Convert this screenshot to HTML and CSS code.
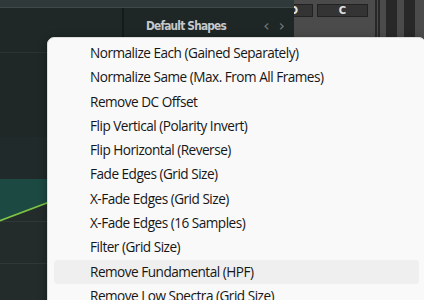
FILE: index.html
```html
<!DOCTYPE html>
<html>
<head>
<meta charset="utf-8">
<link rel="stylesheet" href="styles.css">
</head>
<body>
<div class="app">
  <div class="editor">
    <div class="topstrip"></div>
    <div class="editor-body">
      <div class="wave">
        <svg width="122" height="292" viewBox="0 0 122 292">
          <line x1="0" y1="44.5" x2="122" y2="44.5" stroke="#2a3333" stroke-width="1"/>
          <line x1="0" y1="129.5" x2="122" y2="129.5" stroke="#283131" stroke-width="1"/>
          <rect x="0" y="129" width="122" height="42" fill="#212a2a"/>
          <rect x="0" y="171" width="122" height="121" fill="#232b2b"/>
          <polygon points="0,171 70,171 70,186.3 0,212.7" fill="#1d4943"/>
          <line x1="0" y1="213.5" x2="122" y2="213.5" stroke="#2f3838" stroke-width="1"/>
          <line x1="0" y1="255.5" x2="122" y2="255.5" stroke="#2f3838" stroke-width="1"/>
          <line x1="0" y1="212.7" x2="70" y2="186.3" stroke="#7cc444" stroke-width="1.6"/>
        </svg>
      </div>
      <div class="shapes">
        <div class="shapes-head">
          <span class="shapes-title">Default Shapes</span>
          <span class="arrows"><span>&#8249;</span><span>&#8250;</span></span>
        </div>
      </div>
    </div>
  </div>
  <div class="rack">
    <div class="rack-buttons">
      <div class="btn btn-d">D</div>
      <div class="btn btn-c">C</div>
    </div>
    <div class="s dark w2"></div>
    <div class="s grey w1"></div>
    <div class="s dark w2"></div>
    <div class="s grey w6"></div>
    <div class="s dark w11"></div>
    <div class="s grey w7"></div>
    <div class="s dark w11"></div>
    <div class="s grey wrest"></div>
  </div>
</div>

<div class="menu">
  <div class="item">Normalize Each (Gained Separately)</div>
  <div class="item">Normalize Same (Max. From All Frames)</div>
  <div class="item">Remove DC Offset</div>
  <div class="item">Flip Vertical (Polarity Invert)</div>
  <div class="item">Flip Horizontal (Reverse)</div>
  <div class="item">Fade Edges (Grid Size)</div>
  <div class="item">X-Fade Edges (Grid Size)</div>
  <div class="item">X-Fade Edges (16 Samples)</div>
  <div class="item">Filter (Grid Size)</div>
  <div class="item hover">Remove Fundamental (HPF)</div>
  <div class="item">Remove Low Spectra (Grid Size)</div>
</div>
</body>
</html>
```
FILE: styles.css
```css
html, body {
  margin: 0;
  padding: 0;
  width: 424px;
  height: 300px;
  overflow: hidden;
  background: #1e2626;
}
body {
  position: relative;
  font-family: "Open Sans", "Noto Sans", sans-serif;
}
.app {
  display: flex;
  width: 424px;
  height: 300px;
}
.editor {
  width: 294px;
  display: flex;
  flex-direction: column;
  flex: none;
}
.topstrip {
  height: 7px;
  background: #2f3939;
  border-bottom: 1px solid #3d4848;
  flex: none;
}
.editor-body {
  flex: 1;
  display: flex;
}
.wave {
  width: 122px;
  border-right: 2px solid #151b1b;
  background: #1f2727;
  flex: none;
}
.wave svg {
  display: block;
}
.shapes {
  flex: 1;
  background: #1f2626;
}
.shapes-head {
  display: flex;
  align-items: center;
  height: 35px;
  padding-left: 22px;
  box-sizing: border-box;
}
.shapes-title {
  font-family: "DejaVu Sans Condensed", "DejaVu Sans", sans-serif;
  font-stretch: condensed;
  font-weight: bold;
  font-size: 11.8px;
  color: #c4c9cc;
  letter-spacing: -0.8px;
}
.arrows {
  margin-left: auto;
  margin-right: 9px;
  display: flex;
  gap: 9px;
  font-family: "DejaVu Sans", sans-serif;
  font-size: 16px;
  color: #6f7878;
}
.rack {
  flex: 1;
  display: flex;
  background: #4b4b4b;
  overflow: hidden;
}
.rack-buttons {
  width: 81px;
  flex: none;
  display: flex;
  align-items: flex-start;
  padding-top: 4px;
  box-sizing: border-box;
}
.btn {
  height: 13px;
  box-sizing: border-box;
  background: #343434;
  border: 1px solid #222;
  color: #e2e2e2;
  font-family: "DejaVu Sans", sans-serif;
  font-weight: bold;
  font-size: 10px;
  line-height: 11px;
  text-align: center;
}
.btn-d {
  width: 38px;
  margin-left: -19px;
  flex: none;
}
.btn-c {
  width: 51px;
  margin-left: 4px;
  flex: none;
}
.s { height: 100%; flex: none; }
.dark { background: #282828; }
.grey { background: #4b4b4b; }
.w1 { width: 1px; }
.w2 { width: 2px; }
.w6 { width: 6px; }
.w7 { width: 7px; }
.w11 { width: 11px; }
.wrest { flex: 1; }

.menu {
  position: absolute;
  left: 47px;
  top: 37px;
  width: 379px;
  height: 290px;
  box-sizing: border-box;
  background: #f9f9f9;
  border: 1px solid #dcdcdc;
  border-radius: 7px;
  box-shadow: 0 2px 8px rgba(0, 0, 0, 0.35);
  padding: 3px 6px 0 6px;
}
.item {
  height: 24.3px;
  line-height: 24.3px;
  padding-left: 36px;
  font-size: 13.6px;
  letter-spacing: -0.5px;
  color: #161616;
  border-radius: 4px;
  white-space: nowrap;
}
.item.hover {
  background: #efefef;
}
```
